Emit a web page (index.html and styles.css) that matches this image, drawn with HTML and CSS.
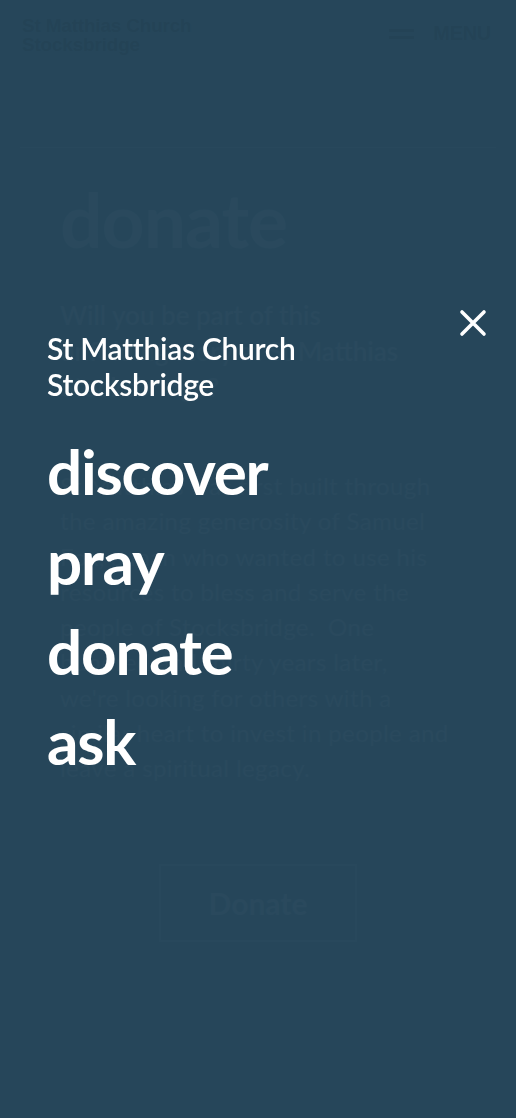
FILE: index.html
```html
<!DOCTYPE html>
<html lang="en">
<head>
<meta charset="utf-8">
<title>donate – St Matthias Church Stocksbridge</title>
<link rel="stylesheet" href="styles.css">
</head>
<body>
<header class="site-header">
  <a class="site-brand" href="#">St Matthias Church<br>Stocksbridge</a>
  <button class="menu-toggle" type="button">
    <span class="burger"><span></span><span></span></span>
    <span class="menu-label">MENU</span>
  </button>
</header>
<main class="page">
  <section class="card">
    <h1 class="page-title">donate</h1>
    <p class="lead">Will you be part of this<br>unfolding story at St Matthias<br>Stocksbridge?</p>
    <p class="body-text">St Matthias was first built through<br>the amazing generosity of Samuel<br>Fox, a man who wanted to use his<br>resources to bless and serve the<br>people of Stocksbridge.&nbsp; One<br>hundred and thirty years later,<br>we're looking for others with a<br>similar heart to invest in people and<br>leave a spiritual legacy.</p>
    <div class="actions"><a class="btn" href="#">Donate</a></div>
  </section>
</main>
<nav class="overlay">
  <div class="overlay-top">
    <div class="overlay-brand">St Matthias Church<br>Stocksbridge</div>
    <button class="close" type="button" aria-label="Close menu">
      <svg width="28" height="28" viewBox="0 0 28 28"><path d="M3 3 L25 25 M25 3 L3 25" stroke="#fff" stroke-width="3.6" stroke-linecap="round" fill="none"/></svg>
    </button>
  </div>
  <ul class="overlay-menu">
    <li><a href="#">discover</a></li>
    <li><a href="#">pray</a></li>
    <li><a href="#">donate</a></li>
    <li><a href="#">ask</a></li>
  </ul>
</nav>
</body>
</html>
```
FILE: styles.css
```css
* { box-sizing: border-box; }
html, body { margin: 0; padding: 0; }
body {
  background: #26475b;
  font-family: Lato, "Liberation Sans", sans-serif;
  width: 516px;
  min-height: 1118px;
}
a { text-decoration: none; color: inherit; }

.site-header {
  display: flex;
  justify-content: space-between;
  align-items: flex-start;
  padding: 16px 25px 0 22px;
  height: 147px;
}
.site-brand {
  font-family: "Liberation Sans", Arial, sans-serif;
  font-weight: 700;
  font-size: 19px;
  line-height: 19px;
  color: #000;
  letter-spacing: -0.2px;
}
.menu-toggle {
  display: flex;
  align-items: center;
  gap: 19px;
  background: none;
  border: 0;
  padding: 6px 0 0;
  cursor: pointer;
}
.burger { display: flex; flex-direction: column; gap: 4px; width: 25px; }
.burger span { display: block; height: 3px; background: #000; }
.menu-label {
  font-family: "Liberation Sans", Arial, sans-serif;
  font-weight: 700;
  font-size: 20px;
  color: #000;
  letter-spacing: -0.3px;
}

.page { padding: 0 20px; }
.card {
  border-top: 1px solid #56646e;
  padding: 28px 40px 80px 40px;
}
.page-title {
  margin: 0;
  font-weight: 700;
  font-size: 75px;
  line-height: 86px;
  color: #6e7a86;
  letter-spacing: -1px;
}
.lead {
  margin: 35px 0 0;
  font-weight: 600;
  font-size: 26px;
  line-height: 36px;
  color: #6e7a86;
}
.body-text {
  margin: 63px 0 0;
  font-size: 24px;
  line-height: 35.3px;
  letter-spacing: 0.4px;
  color: #6e7a86;
  white-space: nowrap;
}
.actions { display: flex; justify-content: center; margin-top: 78px; }
.btn {
  display: flex;
  align-items: center;
  justify-content: center;
  width: 198px;
  height: 78px;
  border: 2px solid #56646e;
  font-weight: 700;
  font-size: 30px;
  color: #6e7a86;
}

.overlay {
  position: fixed;
  inset: 0;
  background: rgba(38, 71, 91, 0.95);
  padding: 309px 29px 0 47px;
  color: #fff;
}
.overlay-top {
  display: flex;
  justify-content: space-between;
  align-items: flex-start;
}
.overlay-brand {
  margin-top: 21px;
  font-weight: 600;
  font-size: 30px;
  line-height: 36px;
  letter-spacing: -0.3px;
}
.close {
  background: none;
  border: 0;
  padding: 0;
  width: 28px;
  height: 28px;
  cursor: pointer;
}
.close svg { display: block; }
.overlay-menu {
  list-style: none;
  margin: 24px 0 0;
  padding: 0;
}
.overlay-menu li a {
  display: block;
  font-weight: 700;
  font-size: 62px;
  line-height: 90px;
  letter-spacing: -1.2px;
  color: #fff;
}
```
